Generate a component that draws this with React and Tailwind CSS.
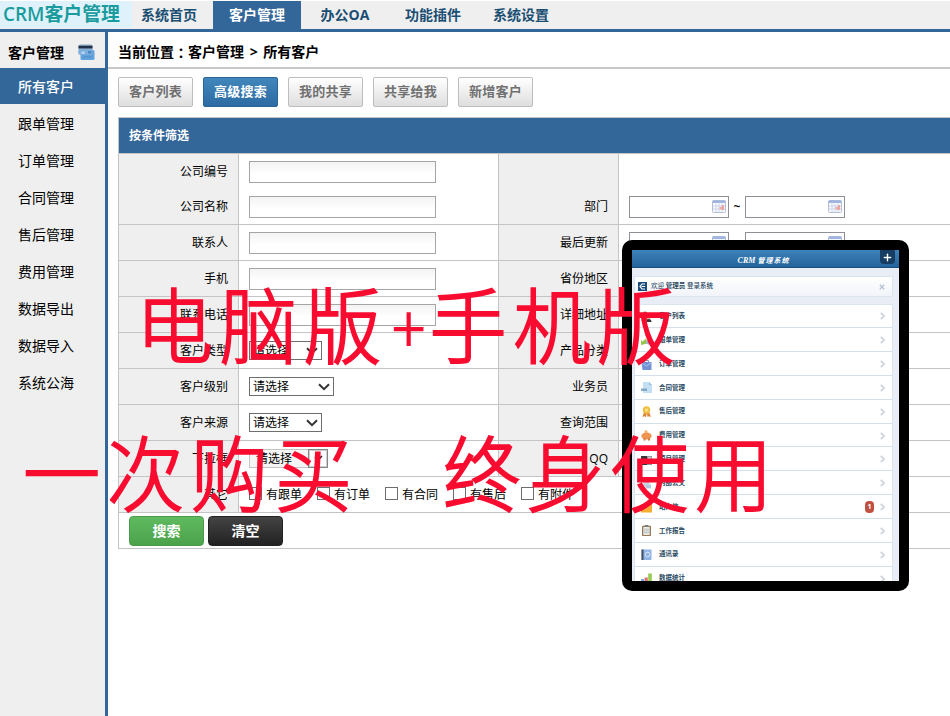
import { LuPlus } from "react-icons/lu";

const topNav = ["系统首页", "客户管理", "办公OA", "功能插件", "系统设置"];

const sideNav = [
  "所有客户", "跟单管理", "订单管理", "合同管理", "售后管理",
  "费用管理", "数据导出", "数据导入", "系统公海",
];

const tabs = ["客户列表", "高级搜索", "我的共享", "共享给我", "新增客户"];

const checks = ["有跟单", "有订单", "有合同", "有售后", "有附件"];

const mobileMenu = [
  { label: "客户列表", icon: "user" },
  { label: "跟单管理", icon: "pen" },
  { label: "订单管理", icon: "bag" },
  { label: "合同管理", icon: "doc" },
  { label: "售后管理", icon: "medal" },
  { label: "费用管理", icon: "pig" },
  { label: "项目管理", icon: "case" },
  { label: "内部公文", icon: "page" },
  { label: "站内信", icon: "mail", badge: "1" },
  { label: "工作报告", icon: "clip" },
  { label: "通讯录", icon: "book" },
  { label: "数据统计", icon: "chart" },
];

function CardsIcon() {
  return (
    <svg width="17" height="17" viewBox="0 0 17 17">
      <rect x="0.5" y="0.5" width="14" height="10" rx="1.5" fill="#8fa9c4" />
      <rect x="0.5" y="1.8" width="14" height="2.6" fill="#23304a" />
      <rect x="2.5" y="6" width="14" height="10" rx="1.5" fill="#62a3dc" />
      <rect x="0.5" y="5" width="14" height="5.5" rx="1.5" fill="#7fb0de" />
      <rect x="3.5" y="7.5" width="3" height="2.5" fill="#b9d5ef" />
      <rect x="10" y="7" width="3.5" height="2.5" fill="#4c87c4" />
      <path d="M5 13h9" stroke="#4c8ccb" strokeWidth="1" />
    </svg>
  );
}

function CalendarIcon() {
  return (
    <svg width="14" height="13" viewBox="0 0 14 13">
      <rect x="0.5" y="0.5" width="13" height="12" rx="1" fill="#f8f9fd" stroke="#b6bdd2" />
      <rect x="0.5" y="0.5" width="13" height="2.6" rx="1" fill="#9db5e0" />
      <path d="M1 6h12M1 9h12M4 3.5v9M7 3.5v9M10 3.5v9" stroke="#cdd5ea" strokeWidth="1" />
      <rect x="7.500" y="7" width="2.500" height="2.500" fill="#ecaaa3" />
      <rect x="10" y="5" width="2" height="5" fill="#e9a59f" />
    </svg>
  );
}

function MenuIcon({ name }) {
  const shapes = {
    user: (
      <>
        <circle cx="4" cy="3" r="2.5" fill="#b5533a" />
        <path d="M0.5 10c0-5 7-5 7 0z" fill="#c8452f" />
        <circle cx="8" cy="6.5" r="1.6" fill="#d8a37c" />
        <path d="M5.5 11c0-4 5-4 5 0z" fill="#222" />
      </>
    ),
    pen: (
      <>
        <path d="M0 5l1.5 1.5L5 3.5l1.5 5L0 10z" fill="#8fbf3c" />
        <path d="M5 8l3-5 3 2-3 5z" fill="#8fa9df" />
      </>
    ),
    bag: (
      <>
        <path d="M3.500 4V1.500h4V4" fill="none" stroke="#6f8ed0" />
        <path d="M0.500 3h10v8h-9z" fill="#6688d0" />
        <path d="M1 4l4.500 3L10 4" stroke="#a7bcec" fill="none" />
      </>
    ),
    doc: (
      <>
        <path d="M2 0h6l3 3v8H2z" fill="#bcdcf3" />
        <path d="M8 0l3 3H8z" fill="#8bbde2" />
        <rect x="0" y="6.500" width="6" height="2.500" fill="#7b9fbd" />
      </>
    ),
    medal: (
      <>
        <path d="M3 6L1.500 11l2-.8L5 11l.8-4 .8 4 1.500-.8 2 .8L8 6z" fill="#d97a1e" />
        <circle cx="5.500" cy="4" r="3.700" fill="#f0b72b" />
        <circle cx="5.500" cy="4" r="1.800" fill="#f8dc7a" />
      </>
    ),
    pig: (
      <>
        <ellipse cx="5.500" cy="6" rx="5.200" ry="3.500" fill="#ef8a3c" />
        <circle cx="5" cy="1.800" r="1.500" fill="#f2a45c" />
        <path d="M2.500 8v2.500h2V8zM7 8v2.500h2V8z" fill="#d46f28" />
      </>
    ),
    case: (
      <>
        <rect x="0" y="2" width="6" height="9" fill="#2b2024" />
        <rect x="6" y="2" width="5" height="9" fill="#8b8b94" />
        <rect x="7" y="3" width="3" height="4" fill="#c9c9d2" />
      </>
    ),
    page: (
      <>
        <rect x="1.500" y="0" width="8" height="11" fill="#dbe3ec" />
        <path d="M3 3h5M3 5h5M3 7h5" stroke="#9fb0c2" strokeWidth="0.800" />
        <rect x="5" y="7" width="5" height="3" fill="#a8c4e0" />
      </>
    ),
    mail: (
      <>
        <rect x="0" y="2" width="11" height="8.500" fill="#f4a51c" />
        <path d="M0 2l5.500 5L11 2" fill="#fbd06a" />
      </>
    ),
    clip: (
      <>
        <rect x="1" y="0.800" width="9" height="10.200" rx="0.800" fill="#8d6845" />
        <rect x="2.300" y="2" width="6.400" height="8" fill="#e6ecea" />
        <path d="M3 4.200h5M3 6h5M3 7.800h5" stroke="#98a8a8" strokeWidth="0.700" />
        <rect x="3.800" y="0" width="3.400" height="2" fill="#6d6d6d" />
      </>
    ),
    book: (
      <>
        <rect x="0.500" y="0.500" width="10" height="10.500" rx="0.800" fill="#86abe3" />
        <rect x="0.500" y="0.500" width="2" height="10.500" fill="#333f57" />
        <circle cx="6.500" cy="5.500" r="2.300" fill="none" stroke="#dbe7fa" />
      </>
    ),
    chart: (
      <>
        <rect x="0" y="6" width="3.200" height="5" fill="#6f9be0" />
        <rect x="3.600" y="4.500" width="3.200" height="6.500" fill="#d9645a" />
        <rect x="7.200" y="0.500" width="3.600" height="10.500" fill="#8cc63f" />
      </>
    ),
  };

  return (
    <svg width="11" height="11" viewBox="0 0 11 11" className="shrink-0 opacity-90">
      {shapes[name]}
    </svg>
  );
}

function Label({ children }) {
  return (
    <div className="flex items-center justify-end border-r border-[#c4c4c4] bg-[#efefef] pr-[10px]">
      {children}
    </div>
  );
}

function TextInput() {
  return (
    <div className="h-[22px] w-[187px] border border-[#a5a5a5] bg-linear-to-b from-[#f3f3f3] to-white to-60%" />
  );
}

function SelectBox({ wide }) {
  return (
    <div
      className={`flex h-[19px] items-center justify-between border border-[#6e6e6e] bg-white pl-[3px] pr-[3px] ${wide ? "w-[85px]" : "w-[73px]"}`}
    >
      <span>请选择</span>
      <Chevron />
    </div>
  );
}

function Chevron() {
  return (
    <svg width="12" height="8" viewBox="0 0 12 8" fill="none">
      <path d="M1 1.200l5 5 5-5" stroke="#333" strokeWidth="2" />
    </svg>
  );
}

function Combo() {
  return (
    <div className="flex h-[19px] w-[79px] items-center border border-[#c4c4c4] bg-[#f5f5f5] pl-[6px]">
      <span className="flex-1">请选择</span>
      <div className="-mr-px flex h-[19px] w-[20px] items-center justify-center border border-[#858585] bg-white shadow-[inset_0_0_0_1px_#cfcfcf]">
        <svg width="9" height="7" viewBox="0 0 9 7" fill="none">
          <path d="M1 2l3 3 4-4" stroke="#222" strokeWidth="1.600" />
        </svg>
      </div>
    </div>
  );
}

function DateRange() {
  return (
    <div className="flex items-center">
      <div className="flex h-[22px] w-[100px] items-center justify-end border border-[#8f8f97] bg-white pr-[2px]">
        <CalendarIcon />
      </div>
      <span className="w-4 text-center font-semibold">~</span>
      <div className="flex h-[22px] w-[100px] items-center justify-end border border-[#8f8f97] bg-white pr-[2px]">
        <CalendarIcon />
      </div>
    </div>
  );
}

function Row({ left, field, right, range, noBorder, className }) {
  return (
    <div
      className={`grid grid-cols-[120px_260px_120px_1fr] ${noBorder ? "" : "border-b border-[#c4c4c4]"} ${className || "h-9"}`}
    >
      <Label>{left}</Label>
      <div className="flex items-center border-r border-[#c4c4c4] pl-[10px]">{field}</div>
      <Label>{right}</Label>
      <div className="flex items-center pl-[10px]">{range}</div>
    </div>
  );
}

function Tablet() {
  return (
    <div className="absolute left-[622px] top-[240px] h-[351px] w-[287px] rounded-[10px] bg-black p-[10px]">
      <div className="h-[331px] w-[267px] overflow-hidden bg-[#e9eef6] text-[6.500px] font-bold text-[#28485f]">
        <div className="relative flex h-[18px] items-center justify-center border-b border-[#1c4d78] bg-linear-to-b from-[#3d83ba] to-[#24639a] pt-[6px] text-[8px] text-white">
          <span className="pr-1 font-['Liberation_Serif','Noto_Sans_CJK_SC',serif] italic">
            CRM <span className="text-[7px] tracking-[1px]">管理系统</span>
          </span>
          <div className="absolute right-1 top-0 flex h-[14px] w-[15px] items-center justify-center rounded-b-sm bg-[#173d63]">
            <LuPlus size={11} strokeWidth={3} />
          </div>
        </div>
        <div className="ml-[2px] mt-[8px] flex h-[21px] w-[259px] items-center border border-[#dbe5f0] bg-linear-to-b from-white to-[#f1f4fa] pl-[3px]">
          <div className="flex h-[9px] w-[9px] items-center justify-center bg-[#1b4b7d]">
            <svg width="7" height="7" viewBox="0 0 7 7" fill="none">
              <path d="M6 1H3L1 3.500 3 6h3M2.500 3.500H6" stroke="#fff" strokeWidth="1.200" />
            </svg>
          </div>
          <span className="ml-[4px] flex-1 whitespace-pre font-normal">
            欢迎 <b>管理员</b> <span className="font-medium">登录系统</span>
          </span>
          <svg width="6" height="6" viewBox="0 0 6 6" className="mr-[7px]">
            <path d="M0.800 0.800l4.400 4.400M5.200 0.800L0.800 5.200" stroke="#b4c3d4" strokeWidth="1.300" />
          </svg>
        </div>
        <div className="ml-[2px] mt-[6.500px] w-[259px] border border-[#dbe5f0] bg-white">
          {mobileMenu.map((item) => (
            <div key={item.label} className="flex h-[23.830px] items-center border-b border-[#d3e0ea] pl-[6px] pr-[7px] pt-px">
              <MenuIcon name={item.icon} />
              <span className="ml-[7px] flex-1">{item.label}</span>
              {item.badge && (
                <span className="mr-[6px] flex h-[12px] w-[9px] items-center justify-center rounded-[4px] bg-[#bf5141] text-[7px] text-white">
                  {item.badge}
                </span>
              )}
              <svg width="5" height="8" viewBox="0 0 5 8" fill="none">
                <path d="M0.800 0.800L4 4 0.800 7.200" stroke="#ccd2da" strokeWidth="1.700" />
              </svg>
            </div>
          ))}
        </div>
      </div>
    </div>
  );
}

export default function App() {
  return (
    <div className="relative flex h-[716px] w-[950px] flex-col overflow-hidden bg-white font-['Open_Sans','Noto_Sans_CJK_SC',sans-serif] text-xs text-black">
      <header className="mt-px flex h-[31px] shrink-0 border-b-[3px] border-[#336699] bg-[#efefef]">
        <div className="w-[125px] shrink-0">
          <div className="flex h-[27px] w-[132px] items-center bg-[#dff2fb] pl-[3px] font-['Open_Sans','Noto_Sans_CJK_SC',sans-serif] text-[18.900px] font-semibold text-[#1a9c9f]">
            <span className="whitespace-nowrap">CRM客户管理</span>
          </div>
        </div>
        <nav className="relative flex text-sm font-bold">
          {topNav.map((item) => (
            <a
              key={item}
              className={`flex w-[88px] items-center justify-center ${item === "客户管理" ? "bg-[#336699] text-white" : "text-[#1a4e72]"}`}
            >
              {item}
            </a>
          ))}
        </nav>
      </header>

      <div className="flex min-h-0 flex-1">
        <aside className="w-[108px] shrink-0 border-r-[3px] border-[#336699] bg-[#efefef] text-sm">
          <div className="flex h-9 items-center justify-between pl-2 pr-[10px] pt-[5px] font-bold">
            <span>客户管理</span>
            <CardsIcon />
          </div>
          {sideNav.map((item, i) => (
            <div
              key={item}
              className={`flex items-center pl-[18px] ${i === 0 ? "h-9 bg-[#336699] pt-px font-medium text-white" : "h-[37px] pt-[3px]"}`}
            >
              {item}
            </div>
          ))}
        </aside>

        <main className="min-w-0 flex-1">
          <div className="flex h-[37px] items-center whitespace-pre border-b-2 border-[#c8c8c8] pl-[10px] pt-1 text-sm font-bold [word-spacing:2px]">
            当前位置<span className="font-['Noto_Sans_CJK_TC',sans-serif]">：</span>客户管理 &gt; 所有客户
          </div>
          <div className="flex gap-[10px] pl-[10px] pt-2">
            {tabs.map((tab) => (
              <button
                key={tab}
                className={`h-[30px] w-[75px] rounded-xs border text-[13px] font-bold tracking-[0.300px] ${tab === "高级搜索" ? "border-[#2a6596] bg-linear-to-b from-[#4187bb] to-[#2c6ba3] text-white" : "border-[#bdbdbd] bg-linear-to-b from-white to-[#dedede] text-[#707070]"}`}
              >
                {tab}
              </button>
            ))}
          </div>

          <section className="ml-[10px] mt-[10px] border-l border-t border-[#c4c4c4]">
            <div className="flex h-[35px] items-center bg-[#336699] pl-[10px] font-bold text-white">
              按条件筛选
            </div>
            <Row left="公司编号" field={<TextInput />} noBorder className="h-[36px] border-t border-[#c4c4c4]" />
            <Row left="公司名称" field={<TextInput />} right="部门" range={<DateRange />} />
            <Row left="联系人" field={<TextInput />} right="最后更新" range={<DateRange />} />
            <Row left="手机" field={<TextInput />} right="省份地区" />
            <Row left="联系电话" field={<TextInput />} right="详细地址" />
            <Row left="客户类型" field={<SelectBox />} right="产品分类" />
            <Row left="客户级别" field={<SelectBox wide />} right="业务员" />
            <Row left="客户来源" field={<SelectBox />} right="查询范围" />
            <Row left="下拉框" field={<Combo />} right="QQ" />
            <div className="grid h-9 grid-cols-[120px_1fr] border-b border-[#c4c4c4]">
              <Label>其它</Label>
              <div className="flex items-center pl-[10px]">
                {checks.map((item) => (
                  <label key={item} className="flex w-[68px] items-center gap-[4px]">
                    <span className="mb-[3px] h-[13px] w-[13px] border border-[#6e6e6e] bg-white" />
                    {item}
                  </label>
                ))}
              </div>
            </div>
            <div className="flex h-9 gap-1 border-b border-[#c4c4c4] pl-[10px] pt-[3px] text-sm font-bold text-white">
              <button className="h-[30px] w-[75px] rounded border border-[#4a9a4a] bg-linear-to-b from-[#5fbb5f] to-[#4ba24b]">搜索</button>
              <button className="h-[30px] w-[75px] rounded border border-[#222] bg-linear-to-b from-[#444] to-[#222]">清空</button>
            </div>
          </section>
        </main>
      </div>

      <Tablet />

      {/* promo slogan laid over the screens */}
      <div className="absolute left-[136px] top-[280px] flex origin-left scale-x-94 whitespace-pre font-['Noto_Sans_CJK_SC',sans-serif] text-[82px] font-light leading-[84px] tracking-[7.400px] text-[#f80c30] [-webkit-text-stroke:2px_#f80c30]">
        电脑版<span className="w-[44px] pt-[2px] text-center text-[66px] font-thin tracking-normal">+</span>手机版
      </div>
      <div className="absolute left-[23px] top-[428px] origin-left scale-x-94 whitespace-pre font-['Noto_Sans_CJK_SC',sans-serif] text-[82px] font-light leading-[84px] tracking-[7.400px] text-[#f80c30] [-webkit-text-stroke:2px_#f80c30]">
        一次购买　终身使用
      </div>
    </div>
  );
}
